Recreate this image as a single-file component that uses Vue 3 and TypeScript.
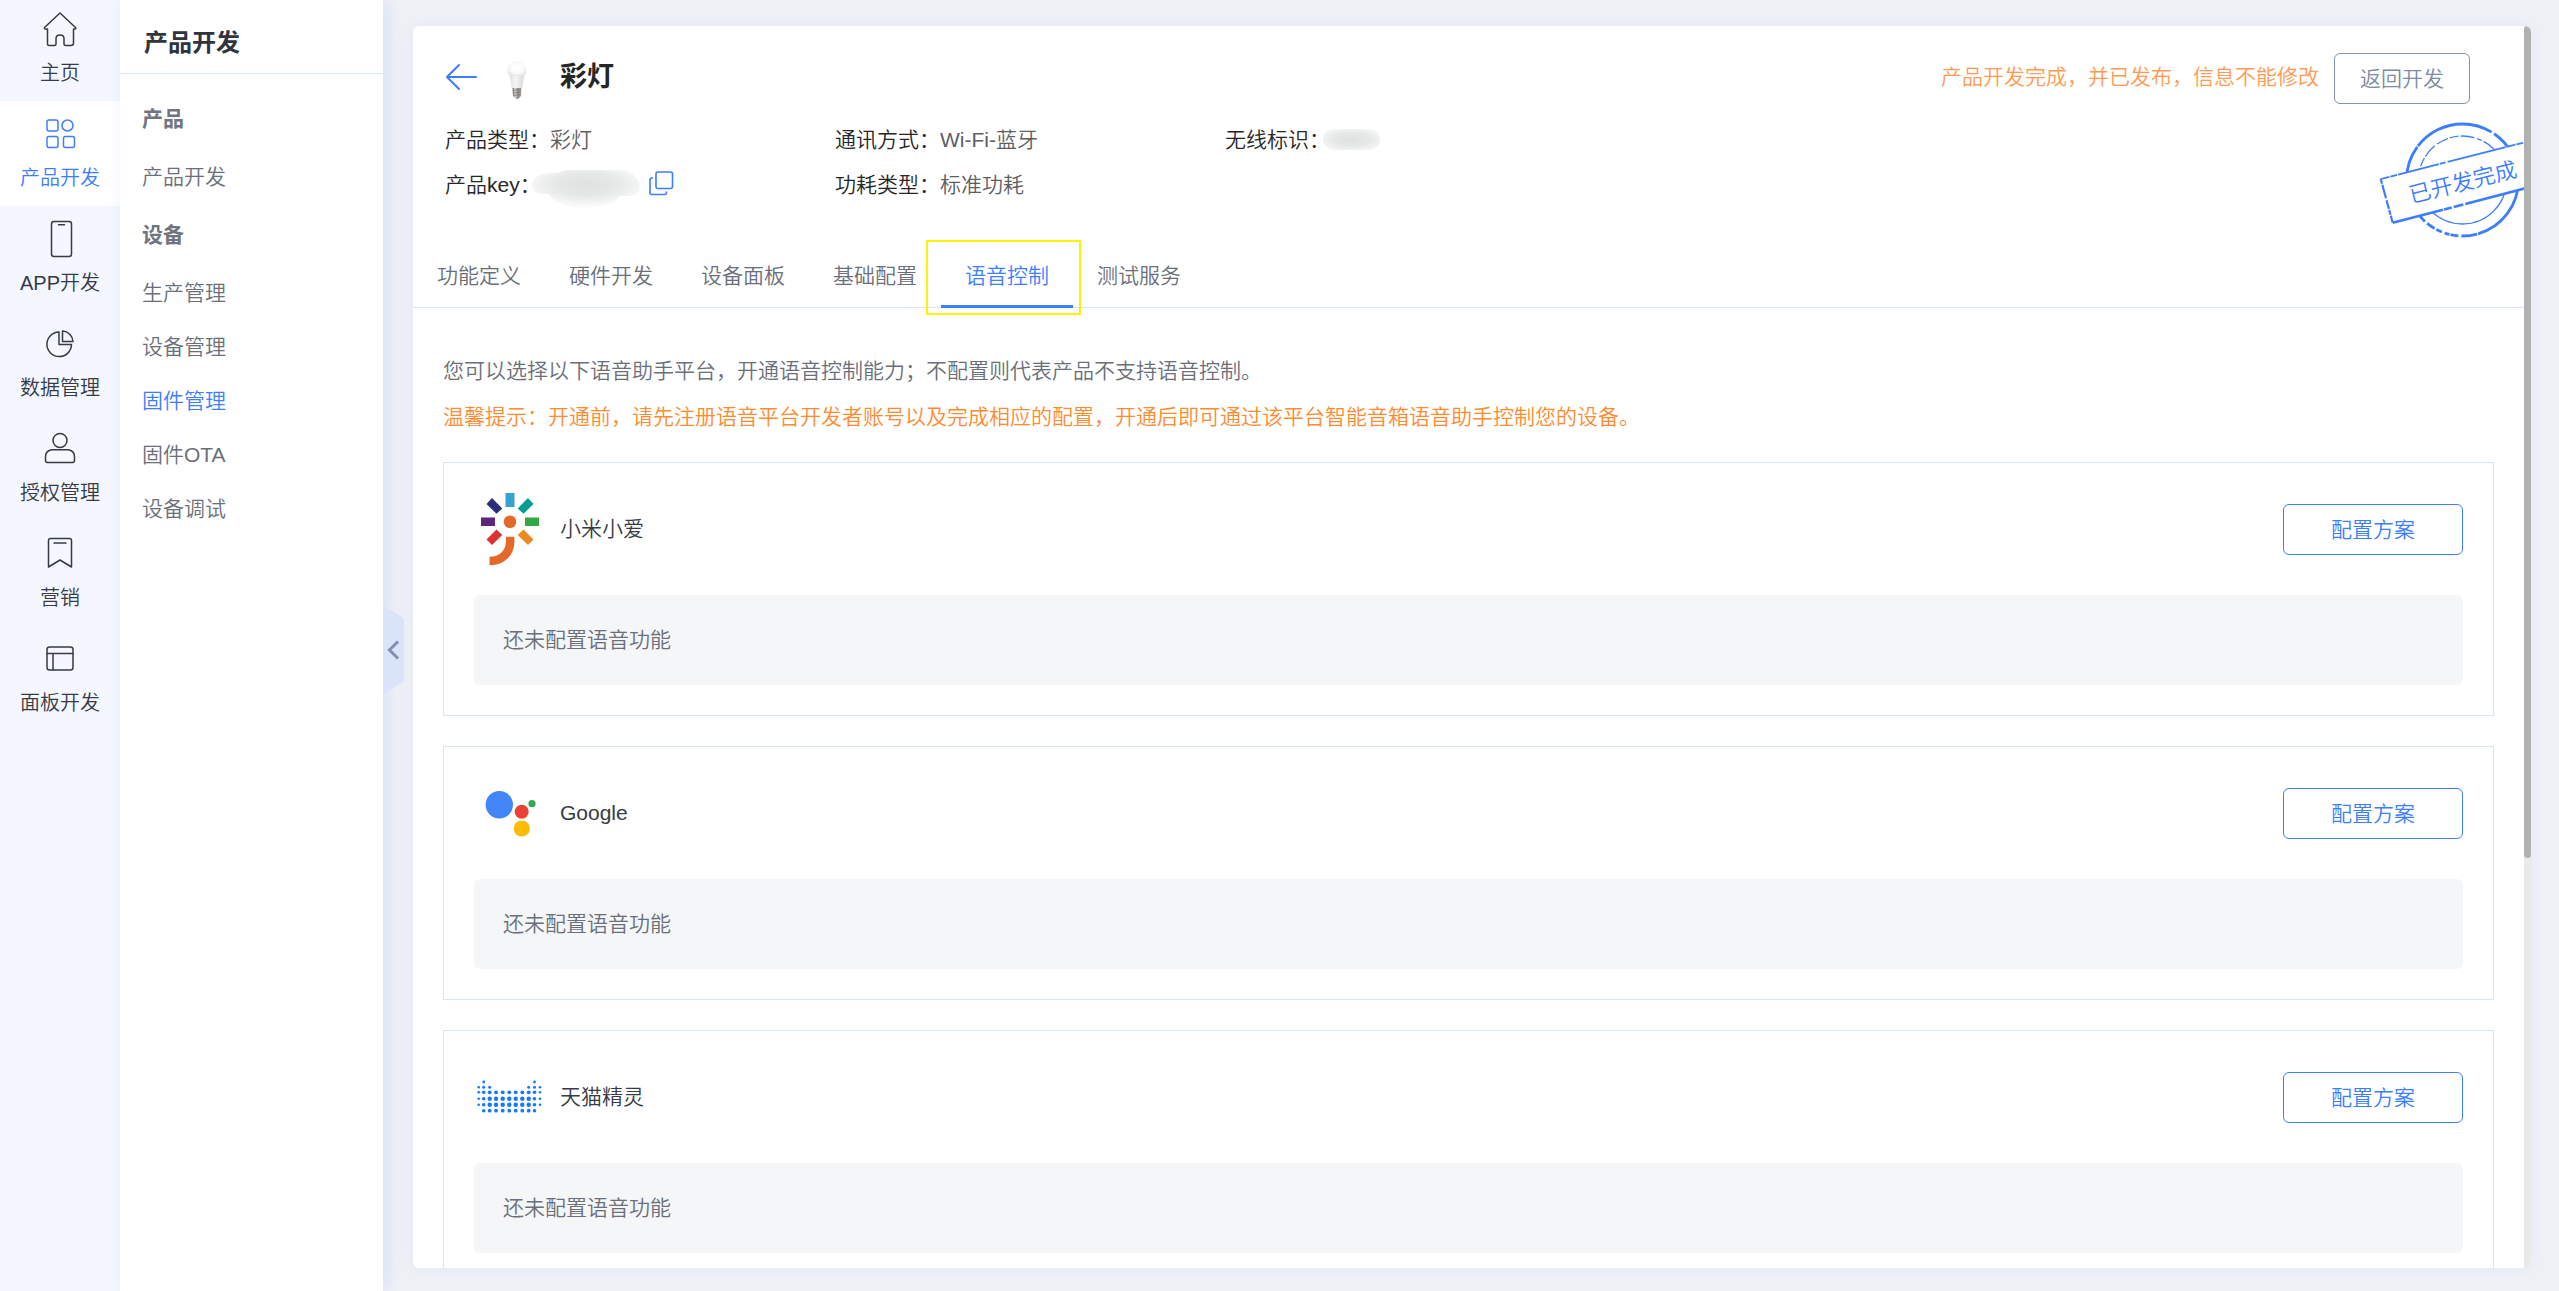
<script setup lang="ts">
import { ref } from 'vue'

interface RailItem { id: string; label: string }
interface MenuGroup { title: string; items: string[] }
interface Platform { id: 'xiaoai' | 'google' | 'tmall'; name: string }
interface Dot { x: number; y: number; r: number }

const rail: RailItem[] = [
  { id: 'home', label: '主页' },
  { id: 'product', label: '产品开发' },
  { id: 'app', label: 'APP开发' },
  { id: 'data', label: '数据管理' },
  { id: 'auth', label: '授权管理' },
  { id: 'market', label: '营销' },
  { id: 'panel', label: '面板开发' },
]
const activeRail = ref('product')

const groups: MenuGroup[] = [
  { title: '产品', items: ['产品开发'] },
  { title: '设备', items: ['生产管理', '设备管理', '固件管理', '固件OTA', '设备调试'] },
]
const activeMenu = ref('固件管理')

const tabs: string[] = ['功能定义', '硬件开发', '设备面板', '基础配置', '语音控制', '测试服务']
const activeTab = ref('语音控制')

const platforms: Platform[] = [
  { id: 'xiaoai', name: '小米小爱' },
  { id: 'google', name: 'Google' },
  { id: 'tmall', name: '天猫精灵' },
]

const cols = [4.7, 9.7, 15.7, 22, 28.7, 35.3, 41.7, 48.3, 54.7, 60.5, 66]
const rows: { y: number; at: number[]; r: number }[] = [
  { y: 21, at: [1, 9], r: 1.4 },
  { y: 26.3, at: [0, 1, 2, 8, 9, 10], r: 1.5 },
  { y: 31.3, at: [0, 1, 2, 3, 4, 5, 6, 7, 8, 9, 10], r: 1.9 },
  { y: 37.7, at: [0, 1, 2, 3, 4, 5, 6, 7, 8, 9, 10], r: 2.2 },
  { y: 43.7, at: [0, 1, 2, 3, 4, 5, 6, 7, 8, 9, 10], r: 2.2 },
  { y: 49.7, at: [1, 2, 3, 4, 5, 6, 7, 8, 9], r: 1.9 },
]
const dots: Dot[] = rows.flatMap((row) =>
  row.at.map((c) => ({
    x: cols[c],
    y: row.y,
    r: c === 0 || c === 10 ? 1.3 : c === 1 || c === 9 ? Math.min(row.r, 1.8) : row.r,
  })),
)
</script>

<template>
  <div class="shell">
    <nav class="rail" aria-label="主导航">
      <a
        v-for="item in rail"
        :key="item.id"
        href="#"
        class="rail-item"
        :class="{ active: item.id === activeRail }"
        @click.prevent="activeRail = item.id"
      >
        <svg class="rail-icon" viewBox="0 0 40 40" aria-hidden="true">
          <path
            v-if="item.id === 'home'"
            d="M20 4 L4.500 18.500 Q4 20 5.500 20 H7.500 V35 Q7.500 36.500 9 36.500 H14.500 Q16 36.500 16 35 V29.500 Q16 26 20 26 Q24 26 24 29.500 V35 Q24 36.500 25.500 36.500 H31 Q33.500 36.500 33.500 34 V20 H35 Q36.500 19.500 35.500 18.500 Z"
          />
          <g v-else-if="item.id === 'product'">
            <rect x="7" y="6" width="11" height="11" rx="2" />
            <circle cx="27.500" cy="11.500" r="5.500" />
            <rect x="7" y="22.500" width="11" height="11" rx="2" />
            <rect x="23.500" y="22.500" width="11" height="11" rx="2" />
          </g>
          <g v-else-if="item.id === 'app'">
            <rect x="11.500" y="2.500" width="20" height="35" rx="2.500" />
            <path d="M18.500 5.800 H24.500" />
          </g>
          <g v-else-if="item.id === 'data'">
            <path d="M19 8 A12.300 12.300 0 1 0 31.500 20.500 H19 Z" />
            <path d="M22.500 7 A11 11 0 0 1 33 17.500 H22.500 Z" />
          </g>
          <g v-else-if="item.id === 'auth'">
            <circle cx="20" cy="11.500" r="7" />
            <path d="M12 20.800 H28 Q34.500 21.500 34.500 28 V31.500 Q34.500 33.500 32.500 33.500 H7.500 Q5.500 33.500 5.500 31.500 V28 Q5.500 21.500 12 20.800 Z" />
          </g>
          <g v-else-if="item.id === 'market'">
            <path d="M10.500 4.500 H29.500 Q31.500 4.500 31.500 6.500 V33 L20 26 L8.500 33 V6.500 Q8.500 4.500 10.500 4.500 Z" />
            <path d="M14 9 H26" />
          </g>
          <g v-else>
            <rect x="7" y="8" width="26" height="23" rx="2.500" />
            <path d="M7 14.500 H33 M13 14.500 V31" />
          </g>
        </svg>
        <span>{{ item.label }}</span>
      </a>
    </nav>

    <aside class="side">
      <h2 class="side-title">产品开发</h2>
      <div class="side-list">
        <template v-for="group in groups" :key="group.title">
          <h3 class="side-group">{{ group.title }}</h3>
          <a
            v-for="name in group.items"
            :key="name"
            href="#"
            class="side-link"
            :class="{ active: name === activeMenu }"
            @click.prevent="activeMenu = name"
          >{{ name }}</a>
        </template>
      </div>
      <button class="collapse" type="button" aria-label="收起菜单">
        <svg viewBox="0 0 21 88" aria-hidden="true">
          <path d="M0 0 L19 11 Q21 12 21 14 V74 Q21 76 19 77 L0 88 Z" fill="#d9e4f8" />
          <path d="M15 35.500 L6.500 44 L15 52.500" fill="none" stroke="#8191ad" stroke-width="3" />
        </svg>
      </button>
    </aside>

    <main class="main">
      <div class="card">
        <div class="content">
          <header class="head">
            <button class="back" type="button" aria-label="返回">
              <svg viewBox="0 0 32 28" aria-hidden="true">
                <path d="M14 2 L2 14 L14 26 M2 14 H31" />
              </svg>
            </button>
            <svg class="bulb" viewBox="0 0 24 40" aria-hidden="true">
              <defs>
                <radialGradient id="glass" cx="50%" cy="45%" r="55%">
                  <stop offset="0" stop-color="#ffffff" />
                  <stop offset="0.7" stop-color="#fafafa" />
                  <stop offset="1" stop-color="#e6e6e6" />
                </radialGradient>
                <linearGradient id="neck" x1="0" x2="1" y1="0" y2="0">
                  <stop offset="0" stop-color="#dedede" />
                  <stop offset="0.4" stop-color="#f5f5f5" />
                  <stop offset="1" stop-color="#d8d8d8" />
                </linearGradient>
                <linearGradient id="screw" x1="0" x2="1" y1="0" y2="0">
                  <stop offset="0" stop-color="#6d6764" />
                  <stop offset="0.3" stop-color="#dedbd9" />
                  <stop offset="0.6" stop-color="#8b8582" />
                  <stop offset="1" stop-color="#b5b0ad" />
                </linearGradient>
              </defs>
              <path d="M2.500 10.500 A9.500 9.500 0 0 1 21.500 10.500 Q21.500 14 19.500 16 H4.500 Q2.500 14 2.500 10.500 Z" fill="url(#glass)" />
              <path d="M4.500 16 H19.500 Q18 20 17.500 28 H6.500 Q6 20 4.500 16 Z" fill="url(#neck)" />
              <path d="M7.500 28 H16.500 L16 36 L13 39 H11 L8 36 Z" fill="url(#screw)" />
              <path d="M8 30.500 L16 29.500 M8 33 L16 32 M8 35.500 L16 34.500" stroke="#77716e" stroke-width="0.700" />
            </svg>
            <h1 class="name">彩灯</h1>
            <p class="notice">产品开发完成，并已发布，信息不能修改</p>
            <button class="return" type="button">返回开发</button>
          </header>

          <dl class="info">
            <div><dt>产品类型：</dt><dd>彩灯</dd></div>
            <div><dt>通讯方式：</dt><dd>Wi-Fi-蓝牙</dd></div>
            <div><dt>无线标识：</dt><dd><span class="mask"></span></dd></div>
            <div>
              <dt class="key">产品key：</dt>
              <dd>
                <svg class="smudge" viewBox="0 0 108 38" aria-hidden="true">
                  <defs>
                    <radialGradient id="smudge" cx="50%" cy="38%" r="62%">
                      <stop offset="0" stop-color="#dfe1e1" />
                      <stop offset="0.5" stop-color="#e7e9e9" />
                      <stop offset="1" stop-color="#fdfdfd" />
                    </radialGradient>
                  </defs>
                  <path d="M10 4 Q20 3 26 3 Q32 0 36 0 H92 Q102 2 103 7 Q108 10 108 18 Q106 26 98 26 H88 Q82 34 66 36 Q48 41 30 34 Q20 30 17 24 H8 Q0 22 0 14 Q2 6 10 4 Z" fill="url(#smudge)" />
                </svg>
                <button class="copy" type="button" aria-label="复制">
                  <svg viewBox="0 0 26 26" aria-hidden="true">
                    <rect x="8" y="2" width="16.500" height="16.500" rx="2" />
                    <path d="M5 8 H4 Q2 8 2 10 V22.500 Q2 24.500 4 24.500 H16.500 Q18.500 24.500 18.500 22.500 V21.500" />
                  </svg>
                </button>
              </dd>
            </div>
            <div><dt>功耗类型：</dt><dd>标准功耗</dd></div>
          </dl>

          <svg class="stamp" viewBox="0 0 148 124" role="img" aria-label="已开发完成">
            <g fill="none" stroke="#3d7dff">
              <circle cx="86.500" cy="62" r="56" stroke-width="2.800" stroke-dasharray="72 1 16 3 8 1 5 3 6 2 9 3 18 4 60 1 82 3 60 1" />
              <circle cx="86.500" cy="62" r="44" stroke-width="1.300" stroke-dasharray="150 2 9 2 14 3 12 2 9 2 14 3 5 2 60 1" />
              <path d="M4.700 61 L16.700 104.700 L170 65 L158 22 Z" fill="#fff" stroke="none" />
              <path d="M4.700 61 L158 22" stroke-width="1.800" stroke-dasharray="9 1 7 1 42 1 6 2 60 1" />
              <path d="M16.700 104.700 L170 65" stroke-width="2.600" stroke-dasharray="52 1 8 2 10 2 70 1" />
              <path d="M4.700 61 L16.700 104.700" stroke-width="2.200" stroke-dasharray="5 1 14 2 9 1" />
            </g>
            <text x="86.500" y="72" transform="rotate(-14 86.500 63)" text-anchor="middle">已开发完成</text>
          </svg>

          <div class="tabs" role="tablist">
            <button
              v-for="tab in tabs"
              :key="tab"
              type="button"
              role="tab"
              class="tab"
              :class="{ active: tab === activeTab }"
              :aria-selected="tab === activeTab"
              @click="activeTab = tab"
            >{{ tab }}</button>
          </div>

          <section class="body">
            <p class="tip">您可以选择以下语音助手平台，开通语音控制能力；不配置则代表产品不支持语音控制。</p>
            <p class="tip warn">温馨提示：开通前，请先注册语音平台开发者账号以及完成相应的配置，开通后即可通过该平台智能音箱语音助手控制您的设备。</p>

            <article v-for="p in platforms" :key="p.id" class="platform">
              <div class="platform-head">
                <svg class="logo" viewBox="0 0 72 72" aria-hidden="true">
                  <g v-if="p.id === 'xiaoai'">
                    <rect x="31.500" y="0" width="9" height="14" fill="#38a1d3" />
                    <rect x="51" y="24.500" width="14" height="8.500" fill="#33a846" />
                    <rect x="7" y="24.500" width="14" height="8.500" fill="#5b2580" />
                    <path d="M12.500 11 L18 5 L28.300 15.500 L22.500 20.700 Z" fill="#2b2f78" />
                    <path d="M59.500 11 L54 5 L43.700 15.500 L49.500 20.700 Z" fill="#009e92" />
                    <path d="M12.500 46.500 L18 52 L28.300 42 L22.500 36.500 Z" fill="#dc3033" />
                    <path d="M59.500 46.500 L54 52 L43.700 42 L49.500 36.500 Z" fill="#ec8a20" />
                    <circle cx="36" cy="28.800" r="6.300" fill="#e5682b" />
                    <path d="M36.200 43.800 V49 C35.800 60 28 68 15.500 68" fill="none" stroke="#e5682b" stroke-width="8.500" />
                  </g>
                  <g v-else-if="p.id === 'google'">
                    <circle cx="25.300" cy="27.700" r="13.700" fill="#4285f4" />
                    <circle cx="47.700" cy="34.700" r="7" fill="#ea4335" />
                    <circle cx="58" cy="26.700" r="3.600" fill="#34a853" />
                    <circle cx="47.800" cy="51.500" r="8.100" fill="#fbbc05" />
                  </g>
                  <g v-else fill="#1677ff">
                    <circle v-for="(d, i) in dots" :key="i" :cx="d.x" :cy="d.y" :r="d.r" />
                  </g>
                </svg>
                <h4 class="platform-name">{{ p.name }}</h4>
                <button class="config" type="button">配置方案</button>
              </div>
              <p class="empty">还未配置语音功能</p>
            </article>
          </section>
        </div>
        <div class="track" aria-hidden="true"><div class="thumb"></div></div>
      </div>
    </main>
  </div>
</template>

<style>
body {
  margin: 0;
  overflow: hidden;
}
</style>

<style scoped>
.shell {
  display: flex;
  height: 100vh;
  overflow: hidden;
  background: #f0f1f6;
  color: #6a6f79;
  font-family: "Liberation Sans", "Noto Sans CJK SC", sans-serif;
  font-size: 21px;
  font-weight: 350;
}
h1, h2, h3, h4, p, dl, dd {
  margin: 0;
}
a {
  color: inherit;
  text-decoration: none;
}
button {
  padding: 0;
  border: 0;
  background: none;
  color: inherit;
  font: inherit;
  cursor: pointer;
}
svg {
  display: block;
}

.rail {
  flex: none;
  width: 120px;
  background: #f4f7ff;
}
.rail-item {
  display: flex;
  flex-direction: column;
  align-items: center;
  justify-content: flex-end;
  gap: 9px;
  box-sizing: border-box;
  height: 105px;
  padding-bottom: 13px;
  color: #363b45;
  font-size: 20px;
  line-height: 30px;
}
.rail-item:first-child {
  height: 101px;
}
.rail-item.active {
  background: #fff;
  color: #3d7dff;
}
.rail-icon {
  width: 40px;
  height: 40px;
  fill: none;
  stroke: currentColor;
  stroke-width: 1.5;
  stroke-linejoin: round;
  stroke-linecap: round;
}

.side {
  position: relative;
  flex: none;
  width: 263px;
  background: #fff;
  box-shadow: 4px 0 16px rgba(61, 125, 255, 0.14);
}
.side-title {
  padding: 12px 24px 0;
  border-bottom: 1px solid #d9e4f6;
  color: #2f343d;
  font-size: 24px;
  font-weight: 700;
  line-height: 61px;
}
.side-list {
  display: flex;
  flex-direction: column;
  padding: 14px 22px;
  line-height: 54px;
}
.side-group {
  margin: 4px 0;
  color: #6f747e;
  font-size: 21px;
  font-weight: 700;
}
.side-link.active {
  color: #3d7dff;
}
.collapse {
  position: absolute;
  top: 50%;
  left: 100%;
  width: 21px;
  height: 88px;
  margin-top: -40px;
}

.main {
  flex: 1;
  min-width: 0;
  padding: 26px 28px 23px 30px;
}
.card {
  display: flex;
  height: 100%;
  border-radius: 6px;
  background: #fff;
  box-shadow: 0 0 20px rgba(61, 125, 255, 0.08);
  overflow: hidden;
}
.content {
  position: relative;
  flex: 1;
  min-width: 0;
  overflow: hidden;
}
.track {
  flex: none;
  width: 7px;
  background: #e9e9e9;
}
.thumb {
  height: 67%;
  border-radius: 4px;
  background: #b1b1b1;
}

.head {
  display: flex;
  align-items: flex-start;
  height: 51px;
  padding: 27px 54px 0 32px;
  line-height: 48px;
}
.back,
.bulb {
  margin-top: 10px;
}
.back svg {
  width: 32px;
  height: 28px;
  fill: none;
  stroke: #3d7dff;
  stroke-width: 2;
  stroke-linecap: round;
  stroke-linejoin: round;
}
.bulb {
  width: 24px;
  height: 40px;
  margin: 7px 31px 0 28px;
}
.name {
  flex: 1;
  color: #262626;
  font-size: 27px;
  font-weight: 700;
}
.notice {
  margin-right: 15px;
  color: #ff9a52;
}
.return {
  box-sizing: border-box;
  width: 136px;
  height: 51px;
  border: 1px solid #8492ab;
  border-radius: 6px;
  color: #7d8ba5;
}

.info {
  display: grid;
  grid-template-columns: repeat(3, 390px);
  padding: 13px 32px 0;
  line-height: 45px;
}
.info div,
.info dd {
  display: flex;
  align-items: center;
}
.info dt {
  color: #262626;
}
.info dd {
  height: 45px;
  color: #5c5e62;
}
.key {
  margin-right: -9px;
}
.smudge {
  width: 108px;
  height: 38px;
  margin-top: 8px;
}
.mask {
  width: 57px;
  height: 21px;
  margin-left: -7px;
  border-radius: 10px;
  background: radial-gradient(ellipse at 50% 50%, #dfe1e1 0%, #e6e8e8 45%, #fdfdfd 100%);
}
.copy {
  margin: 0 0 4px 8px;
}
.copy svg {
  width: 26px;
  height: 26px;
  fill: none;
  stroke: #3d7dff;
  stroke-width: 1.6;
}

.stamp {
  position: absolute;
  top: 92px;
  right: 0;
  width: 148px;
  height: 124px;
}
.stamp text {
  fill: #3d7dff;
  font-size: 22px;
}

.tabs {
  display: flex;
  margin-top: 37px;
  box-shadow: inset 0 -1px #d9e4f6;
}
.tab {
  position: relative;
  padding: 0 24px;
  line-height: 64px;
}
.tab.active {
  color: #3d7dff;
  box-shadow: inset 0 -3px #3d7dff;
}
.tab.active::after {
  content: "";
  position: absolute;
  inset: -4px -8px -7px -15px;
  border: 2px solid #fff200;
}

.body {
  padding: 40px 30px 0;
}
.tip {
  line-height: 46px;
}
.warn {
  margin-bottom: 22px;
  color: #ff8a30;
}
.platform {
  margin-bottom: 30px;
  padding: 0 30px 30px;
  border: 1px solid #d9e4f6;
}
.platform-head {
  display: flex;
  align-items: center;
  height: 132px;
}
.logo {
  width: 72px;
  height: 72px;
  margin-right: 14px;
}
.platform-name {
  flex: 1;
  color: #363b45;
  font-size: 21px;
  font-weight: 350;
  line-height: 30px;
}
.config {
  box-sizing: border-box;
  width: 180px;
  height: 51px;
  padding-bottom: 2px;
  border: 1px solid #3d7dff;
  border-radius: 6px;
  color: #3d7dff;
}
.empty {
  padding: 0 29px;
  border-radius: 6px;
  background: #f5f6f8;
  line-height: 90px;
}
</style>
